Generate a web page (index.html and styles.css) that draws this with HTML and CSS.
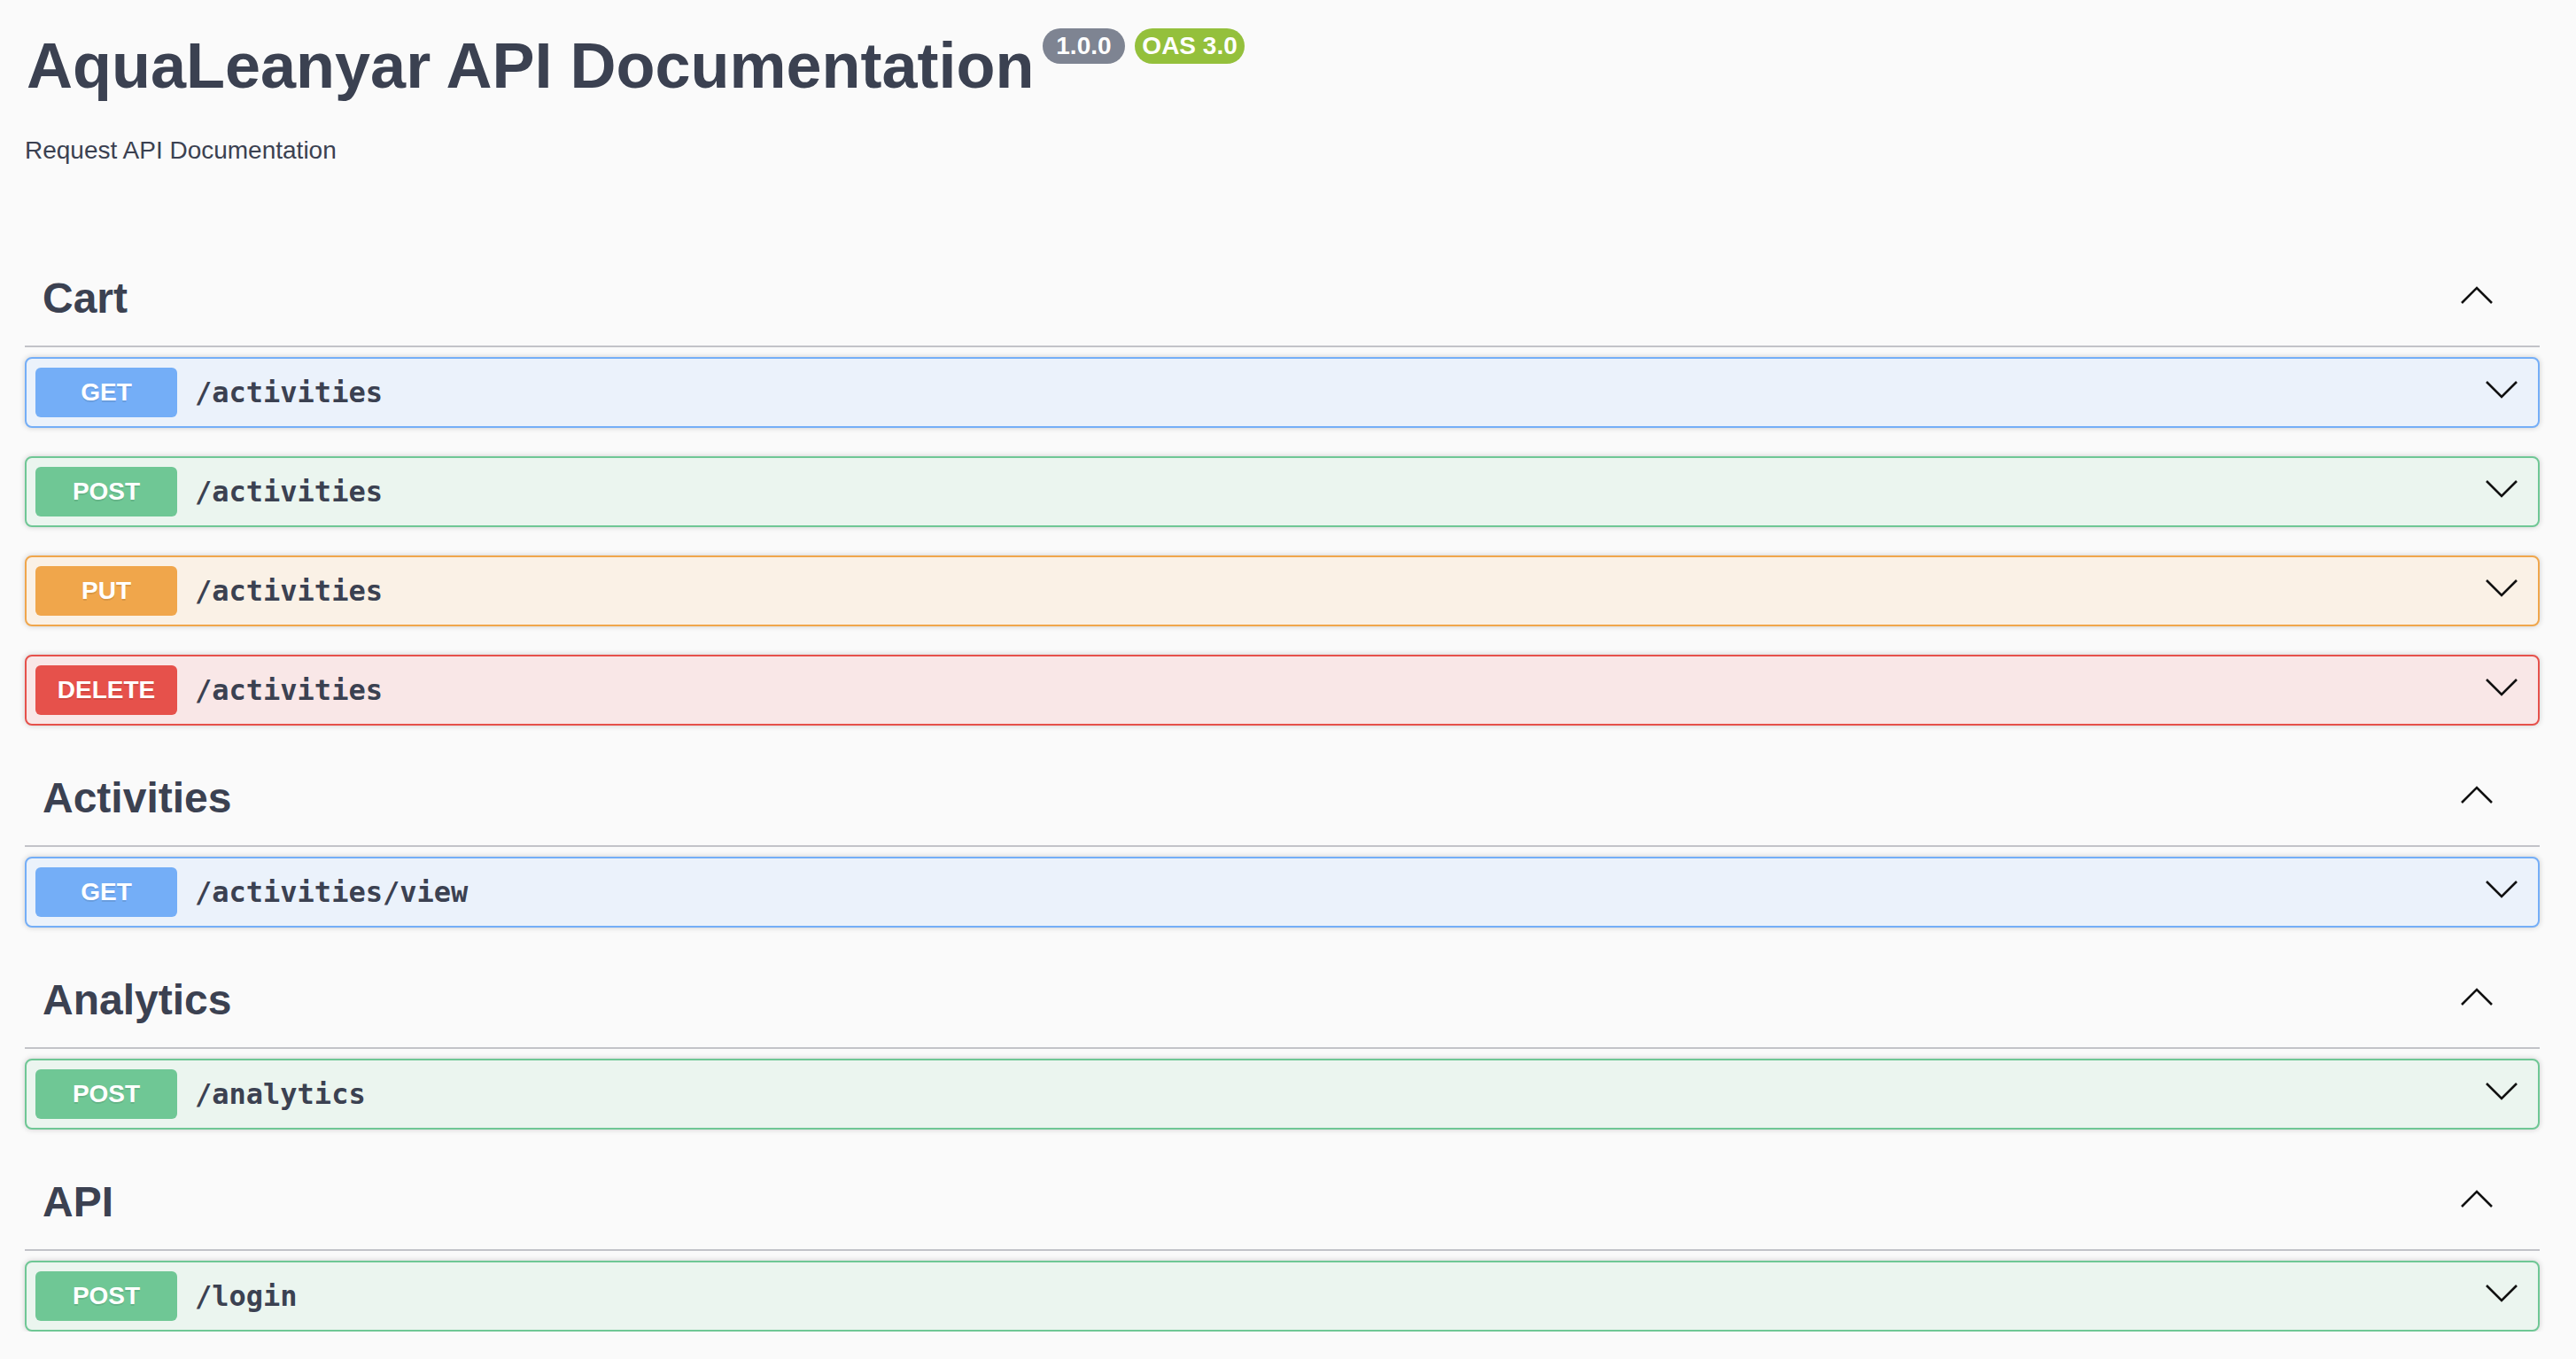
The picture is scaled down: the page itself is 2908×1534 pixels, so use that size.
FILE: index.html
```html
<!DOCTYPE html>
<html lang="en">
<head>
<meta charset="utf-8">
<title>AquaLeanyar API Documentation</title>
<link rel="stylesheet" href="styles.css">
</head>
<body>
<div class="wrapper">
  <header class="info">
    <div class="title-row">
      <h1 class="title">AquaLeanyar API Documentation</h1>
      <span class="badge version"> 1.0.0 </span>
      <span class="badge oas">OAS 3.0</span>
    </div>
    <p class="desc">Request API Documentation</p>
  </header>

  <main class="sections">
    <section class="tag-section">
      <h3 class="tag"><span class="tag-name">Cart</span><svg class="arrow-up" viewBox="0 0 36 20"><polyline points="1,19 18,2 35,19"/></svg></h3>
      <div class="opblock get"><span class="method">GET</span><span class="path">/activities</span><svg class="arrow-down" viewBox="0 0 36 20"><polyline points="1,1 18,18 35,1"/></svg></div>
      <div class="opblock post"><span class="method">POST</span><span class="path">/activities</span><svg class="arrow-down" viewBox="0 0 36 20"><polyline points="1,1 18,18 35,1"/></svg></div>
      <div class="opblock put"><span class="method">PUT</span><span class="path">/activities</span><svg class="arrow-down" viewBox="0 0 36 20"><polyline points="1,1 18,18 35,1"/></svg></div>
      <div class="opblock delete"><span class="method">DELETE</span><span class="path">/activities</span><svg class="arrow-down" viewBox="0 0 36 20"><polyline points="1,1 18,18 35,1"/></svg></div>
    </section>

    <section class="tag-section">
      <h3 class="tag"><span class="tag-name">Activities</span><svg class="arrow-up" viewBox="0 0 36 20"><polyline points="1,19 18,2 35,19"/></svg></h3>
      <div class="opblock get"><span class="method">GET</span><span class="path">/activities/view</span><svg class="arrow-down" viewBox="0 0 36 20"><polyline points="1,1 18,18 35,1"/></svg></div>
    </section>

    <section class="tag-section">
      <h3 class="tag"><span class="tag-name">Analytics</span><svg class="arrow-up" viewBox="0 0 36 20"><polyline points="1,19 18,2 35,19"/></svg></h3>
      <div class="opblock post"><span class="method">POST</span><span class="path">/analytics</span><svg class="arrow-down" viewBox="0 0 36 20"><polyline points="1,1 18,18 35,1"/></svg></div>
    </section>

    <section class="tag-section">
      <h3 class="tag"><span class="tag-name">API</span><svg class="arrow-up" viewBox="0 0 36 20"><polyline points="1,19 18,2 35,19"/></svg></h3>
      <div class="opblock post"><span class="method">POST</span><span class="path">/login</span><svg class="arrow-down" viewBox="0 0 36 20"><polyline points="1,1 18,18 35,1"/></svg></div>
    </section>
  </main>
</div>
</body>
</html>
```

FILE: styles.css
```css
html, body {
  margin: 0;
  padding: 0;
}

body {
  background: #fafafa;
  color: #3b4151;
  font-family: "Liberation Sans", Arial, sans-serif;
}

.wrapper {
  padding: 33px 41px 0 28px;
}

.title-row {
  display: flex;
  align-items: flex-start;
}

.title {
  margin: 0;
  padding-left: 2px;
  font-size: 72px;
  line-height: 83px;
  font-weight: 700;
  color: #3b4151;
}

.badge {
  box-sizing: border-box;
  height: 40px;
  margin-top: -1px;
  padding: 4px 8px;
  border-radius: 57px;
  font-size: 28px;
  line-height: 32px;
  font-weight: 700;
  color: #fff;
  white-space: pre;
}

.version {
  margin-left: 9px;
  background: #7e8492;
}

.oas {
  margin-left: 11px;
  background: #94c03c;
}

.desc {
  margin: 38px 0 0;
  font-size: 28px;
  line-height: 32px;
}

.sections {
  margin-top: 101px;
}

.tag {
  display: flex;
  align-items: center;
  height: 103px;
  margin: 0 0 11px;
  padding: 0 53px 0 20px;
  border-bottom: 2px solid #c2c3c8;
  font-size: 48px;
  line-height: 56px;
  font-weight: 700;
  color: #3b4151;
}

.tag-name {
  flex: 1;
  padding-bottom: 3px;
}

.arrow-up,
.arrow-down {
  width: 36px;
  height: 20px;
  flex: none;
  fill: none;
  stroke: #111;
  stroke-width: 2.6;
}

.arrow-up {
  margin-bottom: 11px;
}

.arrow-down {
  margin-bottom: 6px;
}

.opblock {
  display: flex;
  align-items: center;
  box-sizing: border-box;
  height: 80px;
  margin-bottom: 32px;
  padding: 0 23px 0 10px;
  border: 2px solid;
  border-radius: 8px;
  box-shadow: 0 0 6px rgba(0, 0, 0, 0.19);
}

.tag-section:last-child .opblock:last-child {
  margin-bottom: 0;
}

.method {
  display: flex;
  align-items: center;
  justify-content: center;
  flex: none;
  width: 160px;
  height: 56px;
  border-radius: 6px;
  color: #fff;
  font-size: 28px;
  font-weight: 700;
  text-shadow: 0 2px 0 rgba(0, 0, 0, 0.1);
}

.path {
  flex: 1;
  padding-left: 20px;
  font-family: "DejaVu Sans Mono", "Liberation Mono", monospace;
  font-weight: 700;
  font-size: 32px;
  color: #3b4151;
}

.get {
  background: #ebf2fb;
  border-color: #74aef7;
}
.get .method {
  background: #74aef7;
}

.post {
  background: #ebf5ef;
  border-color: #6fc795;
}
.post .method {
  background: #6fc795;
}

.put {
  background: #faf1e6;
  border-color: #f0a64b;
}
.put .method {
  background: #f0a64b;
}

.delete {
  background: #f9e7e7;
  border-color: #e6514b;
}
.delete .method {
  background: #e6514b;
}
```
